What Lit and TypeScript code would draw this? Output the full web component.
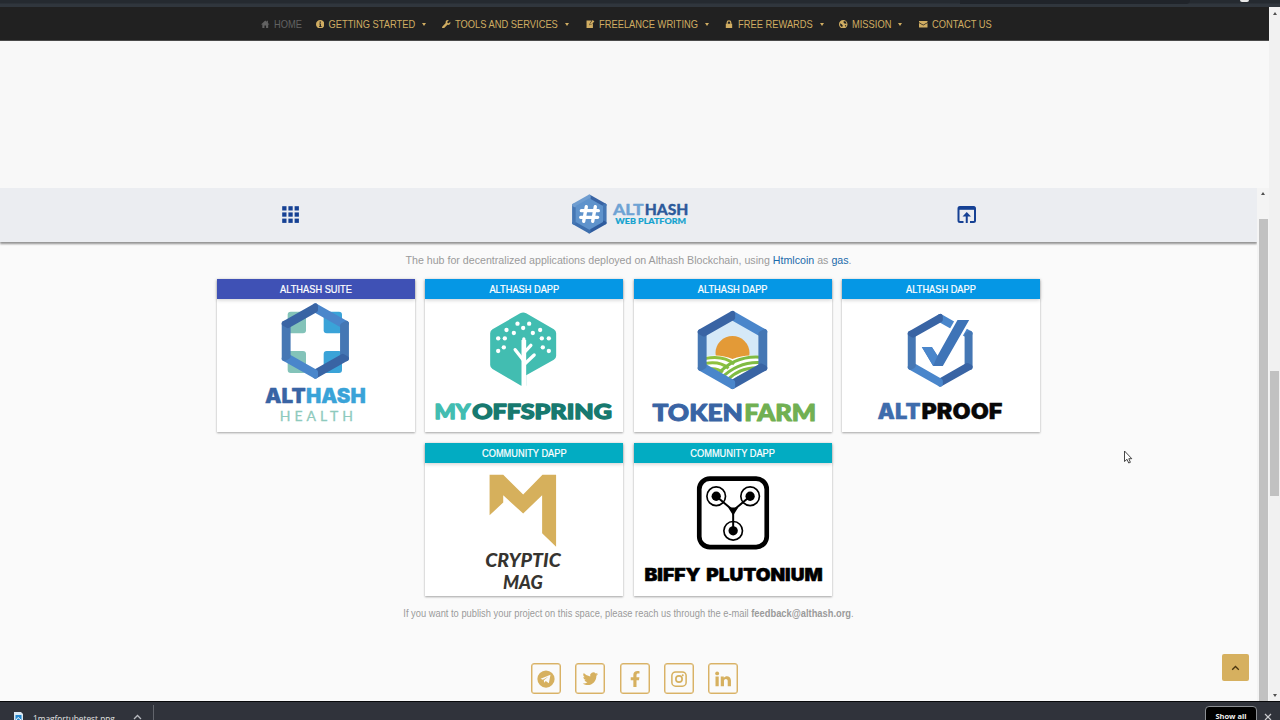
import { LitElement, html, css, svg } from "lit";
import { customElement } from "lit/decorators.js";

type Shades = string[];
const BLUES: Shades = ["#4a86cb", "#4577b4", "#3964a4", "#4a86cb", "#4577b4", "#3964a4"];

// Bevelled hexagonal frame, pointy side up; shades run clockwise from the top vertex.
const hexFrame = (cx: number, cy: number, R: number, r: number, shades: Shades = BLUES, round = 16) => {
  const at = (rad: number, i: number) => {
    const a = (Math.PI / 3) * i - Math.PI / 2;
    return `${(cx + rad * 1.02 * Math.cos(a)).toFixed(1)},${(cy + rad * Math.sin(a)).toFixed(1)}`;
  };
  const outer = R - round / 2;
  const inner = r + round / 2;
  return shades.map(
    (c, i) => svg`<polygon points="${at(outer, i)} ${at(outer, i + 1)} ${at(inner, i + 1)} ${at(inner, i)}"
      fill=${c} stroke=${c} stroke-width=${round} stroke-linejoin="round"></polygon>`
  );
};

const word = (x: number, y: number, w: number, size: number, fill: string, family: string, text: string, bold = 0) =>
  svg`<text x=${x} y=${y} textLength=${w} lengthAdjust="spacingAndGlyphs" font-size=${size} fill=${fill}
    stroke=${fill} stroke-width=${bold} stroke-linejoin="round" font-family=${family} font-weight="900">${text}</text>`;

const HEAVY = "Inter, Lato, sans-serif";
const ROUND = "Lato, sans-serif";

const health = html`<svg class="art" viewBox="22 87 594 399">
  <rect x="234" y="125" width="55" height="65" rx="9" fill="#83c3b9"></rect>
  <rect x="342" y="125" width="55" height="65" rx="9" fill="#3aa3d8"></rect>
  <rect x="234" y="243" width="55" height="66" rx="9" fill="#83c3b9"></rect>
  <rect x="342" y="243" width="55" height="66" rx="9" fill="#3aa3d8"></rect>
  ${hexFrame(317, 213, 113, 85)}
  ${word(166, 400, 122, 59, "#3964a4", HEAVY, "ALT", 1)}
  ${word(289, 400, 179, 59, "#3aa3d8", HEAVY, "HASH", 1)}
  <text x="210" y="453" textLength="220" font-size="42" fill="#8ecabd" stroke="#8ecabd" stroke-width=".8" font-family="Lato, sans-serif">HEALTH</text>
</svg>`;

const dots = [[295, 161], [330, 161], [312, 174], [262, 180], [284, 189], [341, 189], [363, 180], [237, 205], [257, 205], [368, 205], [389, 205], [254, 232], [237, 243], [371, 232], [389, 243]];
const offspring = html`<svg class="art" viewBox="18 87 593 399">
  <path d="M303 130 Q312 125 321 130 L404 178 Q411 182 411 190 V257 Q411 265 404 269 L321 316 V347 H306 L220 297 Q213 293 213 285 V190 Q213 182 220 178 Z" fill="#42bdb1"></path>
  ${dots.map(([x, y]) => svg`<circle cx=${x} cy=${y} r="6.5" fill="#fff"></circle>`)}
  <path d="M314 207 V350 M314 272 L288 239 M314 249 L335 226 M314 284 L345 255" stroke="#fff" stroke-width="10" fill="none" stroke-linecap="round"></path>
  <path d="M314 210 V360" stroke="#fff" stroke-width="14"></path>
  ${word(46, 447, 108, 63, "#42bdb1", ROUND, "MY", 4)}
  ${word(159, 447, 419, 63, "#17796f", ROUND, "OFFSPRING", 4)}
</svg>`;

const farm = html`<svg class="art" viewBox="18 87 593 399">
  <defs><clipPath id="field"><path d="M313 147 L393 193 V286 L313 332 L233 286 V193 Z"></path></clipPath></defs>
  <g clip-path="url(#field)">
    <rect x="225" y="140" width="180" height="200" fill="#d5e9f8"></rect>
    <circle cx="313" cy="249" r="51" fill="#e39a37"></circle>
    <path d="M225 260 Q275 250 313 267 Q355 250 400 260 V345 H225 Z" fill="#fff"></path>
    <path d="M228 266 Q285 254 318 282 M228 281 Q275 272 301 295 M235 299 Q263 291 284 307" stroke="#8fc13f" stroke-width="9" fill="none"></path>
    <path d="M268 314 Q320 255 400 262 M278 326 Q330 273 400 278 M293 335 Q335 288 400 294 M310 340 Q345 303 400 309" stroke="#7fbb43" stroke-width="9" fill="none"></path>
  </g>
  ${hexFrame(313, 240, 117, 89)}
  ${word(73, 452, 271, 69, "#3964a4", ROUND, "TOKEN", 3)}
  ${word(348, 452, 216, 69, "#71b052", ROUND, "FARM", 3)}
</svg>`;

const proof = html`<svg class="art" viewBox="18 87 593 399">
  ${hexFrame(312, 241, 109, 84)}
  <path d="M257 231 H287 L304 257 L364 150 H399 L320 288 H291 Z" fill="#3f74b7" stroke="#fff" stroke-width="14" paint-order="stroke"></path>
  <path d="M257 231 H287 L304 257 L291 288 Z" fill="#4a86cb"></path>
  ${word(124, 446, 129, 63, "#3f6cac", HEAVY, "ALT", 1)}
  ${word(256, 446, 243, 63, "#080808", HEAVY, "PROOF", 1)}
</svg>`;

const cryptic = html`<svg class="art" viewBox="18 80 593 400">
  <path d="M211 115 H252 L312 175 L370 115 H411 V332 L369 291 V177 L312 232 L252 177 V199 L211 237 Z" fill="#d6b05c"></path>
  <g font-style="italic">
    ${word(198, 393, 227, 54, "#363430", ROUND, "CRYPTIC", 0)}
    ${word(251, 458, 120, 54, "#363430", ROUND, "MAG", 0)}
  </g>
</svg>`;

const biffy = html`<svg class="art" viewBox="18 80 593 400">
  <rect x="213" y="127" width="203" height="206" rx="32" fill="none" stroke="#000" stroke-width="14"></rect>
  ${[[264, 180], [366, 180], [315, 284]].map(
    ([x, y]) => svg`<circle cx=${x} cy=${y} r="28" fill="none" stroke="#000" stroke-width="5"></circle>
      <circle cx=${x} cy=${y} r="14" fill="#000"></circle>`
  )}
  <path d="M264 180 L315 223 L366 180 M315 223 V284" stroke="#000" stroke-width="6" fill="none"></path>
  <path d="M300 214 H330 L315 238 Z" fill="#000"></path>
  ${word(48, 434, 169, 51, "#000", HEAVY, "BIFFY", 1.5)}
  ${word(234, 434, 350, 51, "#000", HEAVY, "PLUTONIUM", 1.5)}
</svg>`;

const cards = [
  { kind: "suite", label: "ALTHASH SUITE", art: health },
  { kind: "dapp", label: "ALTHASH DAPP", art: offspring },
  { kind: "dapp", label: "ALTHASH DAPP", art: farm },
  { kind: "dapp", label: "ALTHASH DAPP", art: proof },
  { kind: "community", label: "COMMUNITY DAPP", art: cryptic },
  { kind: "community", label: "COMMUNITY DAPP", art: biffy },
];

const nav = [
  { label: "HOME", sub: false, icon: svg`<path d="M8 1 L0 8.500 H2.500 V15 H6.500 V10.500 H9.500 V15 H13.500 V8.500 H16 L13 5.500 V1.500 H10.800 V3.500 Z"/>` },
  { label: "GETTING STARTED", sub: true, icon: svg`<path fill-rule="evenodd" d="M8 0 A8 8 0 1 0 8 16 A8 8 0 1 0 8 0 M6.800 3 H9.300 V5.300 H6.800 Z M6 6.500 H9.300 V11.300 H10.500 V13 H6 V11.300 H7 V8.200 H6 Z"/>` },
  { label: "TOOLS AND SERVICES", sub: true, icon: svg`<path d="M15.500 3.300 L12.800 6 L10.300 5.700 L10 3.200 L12.700 .5 C9 -.7 6 2 7 5.800 L.8 12 A2.200 2.200 0 0 0 4 15.200 L10.200 9 C14 10 16.700 7 15.500 3.300Z"/>` },
  { label: "FREELANCE WRITING", sub: true, icon: svg`<path fill-rule="evenodd" d="M1 1 H10.500 L7 6.500 L6.300 10 L9.500 9 L13 5.500 V15.500 H1 Z"/><path d="M12.500 0 L15.800 2.800 L9.800 8.300 L7.500 8.800 L8.200 6.300 Z"/>` },
  { label: "FREE REWARDS", sub: true, icon: svg`<path fill-rule="evenodd" d="M3 7 V4.800 A4.500 4.500 0 0 1 12 4.800 V7 H13.500 V15.500 H1.500 V7 Z M5.200 7 H9.800 V5 A2.300 2.300 0 0 0 5.200 5 Z"/>` },
  { label: "MISSION", sub: true, icon: svg`<path fill-rule="evenodd" d="M8 0 A8 8 0 1 0 8 16 A8 8 0 1 0 8 0 M9 1.700 L12.500 3 L14.300 6.500 L11 7 L8.500 4.500 Z M2 6 L5 8 L7 9.800 L6 13.800 L2.500 11 Z M11 10 L14 9.500 L11.500 13 Z"/>` },
  { label: "CONTACT US", sub: false, icon: svg`<path d="M0 2 H16 V4 L8 9 L0 4 Z M0 5.500 L8 10.500 L16 5.500 V14 H0 Z"/>` },
];

const socials = [
  svg`<circle cx="12" cy="12" r="11.500"/><path fill="#fafafa" d="M4.800 11.600 L18 6.300 L15.800 17.600 L11.700 14.700 L9.500 16.900 L9.100 13.500 L15.200 8.500 L7.800 13 Z"/>`,
  svg`<path d="M22.700 5.200 A8 8 0 0 1 20.400 5.900 A4 4 0 0 0 22.200 3.700 A8 8 0 0 1 19.600 4.700 A4.200 4.200 0 0 0 12.300 8.500 A12 12 0 0 1 3.700 4.100 A4.200 4.200 0 0 0 5 9.700 L3.100 9.200 A4.200 4.200 0 0 0 6.500 13.300 L4.600 13.400 A4.200 4.200 0 0 0 8.500 16.300 A8.500 8.500 0 0 1 2.300 18 C11 23.400 20.700 17.200 20.500 7.500 A9 9 0 0 0 22.700 5.200Z"/>`,
  svg`<path d="M14 22.500 V13.500 H17.300 L17.900 9.600 H14 V7.300 C14 5.700 14.700 4.800 16.200 4.800 H18 V1.500 C12.700 .5 9.800 2.500 9.800 6.400 V9.600 H6.300 V13.500 H9.800 V22.500 Z"/>`,
  svg`<g fill="none" stroke="#d6b05f"><rect x="2.500" y="2.500" width="19" height="19" rx="5" stroke-width="2"/><circle cx="12" cy="12" r="4.200" stroke-width="2.200"/></g><circle cx="17" cy="7" r="1.300"/>`,
  svg`<path d="M2 8.500 H6.300 V21.500 H2 Z M9 8.500 H13 V10.300 C16 6.500 22.600 8 22.600 14 V21.500 H18.300 V14.800 C18.300 11.200 13.300 11.200 13.300 14.800 V21.500 H9 Z"/><circle cx="4.200" cy="4.500" r="2.600"/>`,
];

@customElement("app-root")
export class AppRoot extends LitElement {
  static styles = css`
    :host { display: flex; flex-direction: column; width: 1280px; height: 720px; overflow: hidden; position: relative; background: #fafafa; font-family: "Liberation Sans", Arial, sans-serif; }
    * { box-sizing: border-box; }
    svg { display: block; flex: none; }
    .chrome { height: 7px; flex: none; background: linear-gradient(#252a30 0 3px, #30363d 4px); display: flex; justify-content: flex-end; padding-right: 31px; }
    .omnibox { width: 230px; height: 4px; background: #20242a; border-radius: 0 0 6px 0; margin-right: 50px; }
    .avatar { width: 9px; height: 1.500px; background: #e8e8e8; border-radius: 0 0 5px 5px; }
    .window { flex: 1; min-height: 0; display: flex; }
    .page { width: 1269px; display: flex; flex-direction: column; }
    .nav { height: 34px; flex: none; background: #212121; border-bottom: 1px solid #4a4a4a; display: grid; grid-template-columns: 54.500px 126.500px 144px 139px 114px 80px 80px; padding: 1px 0 0 261px; align-items: center; color: #d0ad62; font-size: 9.330px; }
    .item { display: flex; align-items: center; white-space: nowrap; }
    .item svg { width: 8.500px; height: 8.500px; margin-right: 4.500px; fill: currentColor; }
    .tall { display: inline-block; transform: translateY(.4px) scaleY(1.1); }
    .home { color: #626262; }
    .caret { border: 2.200px solid transparent; border-top: 3.500px solid currentColor; border-bottom: 0; margin: 0 0 0 7px; }
    .blank { height: 147px; flex: none; background: #f8f8f8; }
    .frame { flex: 1; min-height: 0; display: flex; }
    .hub { width: 1257px; display: flex; flex-direction: column; align-items: center; background: #fafafa; }
    .bar { width: 100%; height: 54px; flex: none; background: #ebedf1; box-shadow: 0 2px 2px rgba(0,0,0,.42); display: grid; grid-template-columns: 281px 288px 387px 1fr; align-items: center; }
    .bar svg { grid-row: 1; }
    .grid-icon { grid-column: 2; }
    .brand { grid-column: 3; }
    .open { grid-column: 4; }
    .lead { margin-top: 12px; height: 13px; line-height: 13px; font-size: 10.650px; color: #9b9b9b; white-space: nowrap; transform: scaleY(1.08); }
    .lead a { color: #1b6bab; }
    .cards { display: flex; flex-wrap: wrap; justify-content: center; width: 824px; gap: 11px 10.330px; margin-top: 12px; }
    .card { width: 198px; height: 153px; background: #fff; box-shadow: 0 1px 2px rgba(0,0,0,.35); }
    .label { height: 20px; line-height: 20px; text-align: center; color: #fff; font-size: 9.250px; -webkit-text-stroke: .2px #fff; box-shadow: 0 1px 4px rgba(0,0,0,.2); }
    .suite .label { background: #3f51b5; }
    .dapp .label { background: #0597e5; }
    .community .label { background: #02acc2; }
    .art { width: 198px; height: 133px; }
    .note { margin-top: 11.500px; height: 12px; line-height: 12px; font-size: 9.330px; color: #9b9b9b; white-space: nowrap; transform: scaleY(1.08); }
    .social { display: flex; gap: 14.300px; margin: 43.500px 0 0 12px; }
    .social div { width: 30px; height: 31px; border: 1.500px solid #d9b266; box-shadow: inset 0 0 0 .5px #dcb870; border-radius: 3px; display: flex; align-items: center; justify-content: center; }
    .social svg { width: 18px; height: 18px; fill: #d6b05f; }
    .inner-scroll { width: 12px; background: #f4f4f4; display: flex; flex-direction: column; align-items: center; }
    .inner-thumb { width: 9px; flex: 1; background: #c1c1c1; margin-top: 24px; }
    .outer-scroll { width: 11px; background: #f1f1f1; display: flex; flex-direction: column; align-items: center; justify-content: space-between; padding: 5px 0 4px; }
    .outer-thumb { width: 9px; height: 125px; background: #c1c1c1; margin-top: 158px; }
    .up, .down { border: 2.500px solid transparent; }
    .up { border-bottom: 3px solid #505050; border-top: 0; }
    .down { border-top: 3px solid #505050; border-bottom: 0; }
    .inner-scroll .up { margin-top: 4px; }
    .shelf { height: 19px; flex: none; background: #30333b; border-top: 1px solid #08090b; display: flex; color: #e4e4e4; font: 8.300px/12px "Open Sans", sans-serif; overflow: hidden; }
    .file { width: 153px; height: 24px; display: flex; padding: 10px 0 0 13px; }
    .file svg { margin-right: 9px; }
    .filename { width: 99px; transform: translateY(.7px) scaleY(1.1); }
    .divider { width: 1px; height: 20px; margin-top: 3px; background: #62656c; }
    .show { margin: 4px 0 0 auto; width: 52px; height: 20px; flex: none; background: #000; border: 1px solid #8c8f94; border-radius: 4px; text-align: center; font-weight: 700; font-size: 7.500px; line-height: 19px; color: #f2f2f2; }
    .close { margin: 11px 8px 0 7px; }
    .top { position: absolute; left: 1222px; top: 654px; width: 27px; height: 27px; border-radius: 2px; background: #d6b05f; display: flex; align-items: center; justify-content: center; }
    .cursor { position: absolute; left: 1122.500px; top: 450px; }
  `;

  render() {
    return html`
      <div class="chrome"><div class="omnibox"></div><div class="avatar"></div></div>
      <div class="window">
        <div class="page">
          <nav class="nav">
            ${nav.map((n, i) => html`<div class="item ${i ? "" : "home"}"><svg viewBox="0 0 16 16">${n.icon}</svg><span class="tall">${n.label}</span>${n.sub ? html`<span class="caret"></span>` : ""}</div>`)}
          </nav>
          <div class="blank"></div>
          <div class="frame">
            <main class="hub">
              <header class="bar">
                <svg class="grid-icon" width="20" height="20" viewBox="0 0 20 20">
                  ${[1.2, 7.4, 13.6].map((y) => [1.2, 7.4, 13.6].map((x) => svg`<rect x=${x} y=${y} width="4.300" height="4.300" fill="#164194"></rect>`))}
                </svg>
                <svg class="brand" width="120" height="42" viewBox="954 41 360 126">
                  ${hexFrame(1015, 101, 58, 44, ["#3964a4", "#4577b4", "#2f5c9e", "#3d6fae", "#4577b4", "#6f9dd0"], 8)}
                  <polygon points="1015,54 1056,77 1056,125 1015,148 974,125 974,77" fill="#5f93cc"></polygon>
                  <path d="M1006 79 L998 123 M1033 79 L1025 123 M991 91 H1042 M989 111 H1040" stroke="#fff" stroke-width="10" stroke-linecap="round"></path>
                  ${word(1086, 105, 92, 47, "#6fa3d4", ROUND, "ALT", 1)}
                  ${word(1181, 105, 131, 47, "#2d5a9b", ROUND, "HASH", 1)}
                  ${word(1093, 132, 212, 24, "#15a3cf", ROUND, "WEB PLATFORM", 0.5)}
                </svg>
                <svg class="open" width="22" height="20" viewBox="0 0 22 20" fill="none" stroke="#164194" stroke-width="2">
                  <path d="M7.500 17 H4 Q2.500 17 2.500 15.500 V3.500 Q2.500 2 4 2 H17.500 Q19 2 19 3.500 V15.500 Q19 17 17.500 17 H14"></path>
                  <path d="M2.500 3.300 H19" stroke-width="3"></path>
                  <path d="M10.750 18 V10"></path><path d="M6.500 11.500 L10.750 7 L15 11.500 Z" fill="#164194" stroke="none"></path>
                </svg>
              </header>
              <div class="lead">The hub for decentralized applications deployed on Althash Blockchain, using <a>Htmlcoin</a> as <a>gas</a>.</div>
              <section class="cards">
                ${cards.map((c) => html`<article class="card ${c.kind}"><div class="label"><span class="tall">${c.label}</span></div>${c.art}</article>`)}
              </section>
              <div class="note">If you want to publish your project on this space, please reach us through the e-mail <b>feedback@althash.org</b>.</div>
              <div class="social">${socials.map((s) => html`<div><svg viewBox="0 0 24 24">${s}</svg></div>`)}</div>
            </main>
            <div class="inner-scroll"><span class="up"></span><div class="inner-thumb"></div></div>
          </div>
        </div>
        <div class="outer-scroll"><span class="up"></span><div class="outer-thumb"></div><span class="down"></span></div>
      </div>
      <footer class="shelf">
        <div class="file">
          <svg width="11" height="14" viewBox="0 0 11 14"><path d="M1 0 H8 L10 2 V14 H1 Z" fill="#dbe8f2"></path><rect x="2.500" y="3" width="6" height="6" fill="#2488cf"></rect><path d="M3 8 L5 5.500 L8 8" stroke="#fff" fill="none"></path></svg>
          <span class="filename">1magfortubetest.png</span>
          <svg width="10" height="8" viewBox="0 0 10 8"><path d="M2 7 L5.500 3.500 L9 7" stroke="#b9bbc0" stroke-width="1.300" fill="none"></path></svg>
        </div>
        <div class="divider"></div>
        <div class="show">Show all</div>
        <svg class="close" width="8" height="8" viewBox="0 0 8 8"><path d="M1 1 L7 7 M7 1 L1 7" stroke="#c9cacd" stroke-width="1.200"></path></svg>
      </footer>
      <div class="top"><svg width="9" height="6" viewBox="0 0 9 6"><path d="M1.200 4.700 L4.500 1.500 L7.800 4.700" fill="none" stroke="#4a3510" stroke-width="1.300"></path></svg></div>
      <svg class="cursor" width="10" height="15" viewBox="0 0 10 15"><path d="M1.500 1 V11.500 L4 9.300 L5.700 13 L7.400 12.300 L5.800 8.700 H8.800 Z" fill="#fff" stroke="#333" stroke-width=".9"></path></svg>
    `;
  }
}
